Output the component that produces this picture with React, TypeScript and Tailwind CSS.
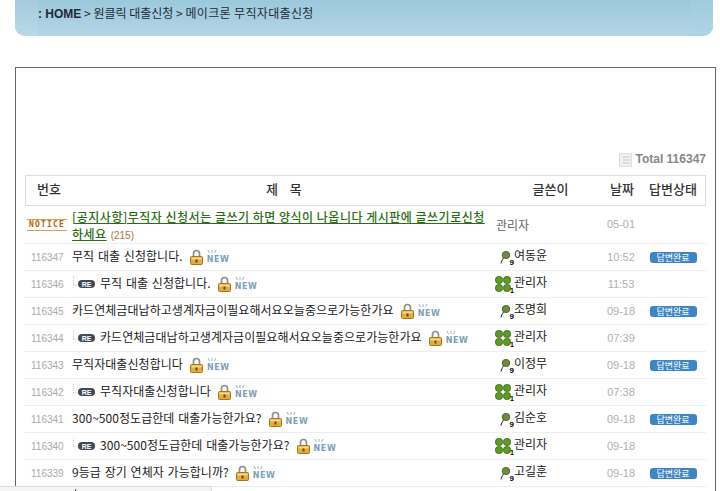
const KR = "font-['Noto_Sans_CJK_KR','Liberation_Sans',sans-serif]";

type Row = {
  no: string;
  title: string;
  re?: boolean;
  author: string;
  admin?: boolean;
  date: string;
  done?: boolean;
};

const rows: Row[] = [
  { no: '116347', title: '무직 대출 신청합니다.', author: '여동윤', date: '10:52', done: true },
  { no: '116346', title: '무직 대출 신청합니다.', re: true, author: '관리자', admin: true, date: '11:53' },
  { no: '116345', title: '카드연체금대납하고생계자금이필요해서요오늘중으로가능한가요', author: '조명희', date: '09-18', done: true },
  { no: '116344', title: '카드연체금대납하고생계자금이필요해서요오늘중으로가능한가요', re: true, author: '관리자', admin: true, date: '07:39' },
  { no: '116343', title: '무직자대출신청합니다', author: '이정무', date: '09-18', done: true },
  { no: '116342', title: '무직자대출신청합니다', re: true, author: '관리자', admin: true, date: '07:38' },
  { no: '116341', title: '300~500정도급한데 대출가능한가요?', author: '김순호', date: '09-18', done: true },
  { no: '116340', title: '300~500정도급한데 대출가능한가요?', re: true, author: '관리자', admin: true, date: '09-18' },
  { no: '116339', title: '9등급 장기 연체자 가능합니까?', author: '고길훈', date: '09-18', done: true },
];

function Lock() {
  return (
    <svg width="13" height="16" viewBox="0 0 13 16" className="ml-[7px] shrink-0">
      <path d="M3.5 8V4.5a3 3 0 0 1 6 0V8" fill="none" stroke="#8f8f86" strokeWidth="1.7" />
      <rect x="0.5" y="7.5" width="12" height="8" rx="1" fill="#e3ac3c" stroke="#a9741c" />
      <rect x="1.5" y="8.5" width="10" height="2" fill="#f6d987" />
      <rect x="5.5" y="10.5" width="2" height="3" fill="#6b4710" />
    </svg>
  );
}

function NewMark() {
  return (
    <span className="relative ml-[4px] inline-block h-[14px] w-[25px] shrink-0">
      <svg width="10" height="5" viewBox="0 0 10 5" className="absolute left-0 top-0">
        <path d="M1 0l1.5 3M5 0v3M9 0L7.5 3" stroke="#8fb6cc" strokeWidth="1" />
      </svg>
      <span className="absolute bottom-0 left-0 font-['DejaVu_Sans',sans-serif] text-[8px] font-bold leading-[9px] tracking-[0.6px] text-[#7d9fb8]">
        NEW
      </span>
    </span>
  );
}

function ReMark() {
  return (
    <span className="mr-[5px] flex shrink-0 items-center">
      <svg width="6" height="12" viewBox="0 0 6 12" className="mb-1">
        <path d="M1.5 0v9h4" fill="none" stroke="#b9c9d6" strokeWidth="1" strokeDasharray="1 1" />
      </svg>
      <span className="flex h-[8px] w-[17px] items-center justify-center rounded-[4px] bg-[#3f4a57] font-['Liberation_Sans',sans-serif] text-[7px] font-bold leading-none text-white">
        RE
      </span>
    </span>
  );
}

function Clover() {
  return (
    <span className="relative h-[16px] w-[19px] shrink-0">
      <svg width="16" height="16" viewBox="0 0 16 16" className="absolute left-0 top-0">
        <g fill="#5f9a22" stroke="#2f6410" strokeWidth="0.8">
          <rect x="0.5" y="0.5" width="7" height="7" rx="3" />
          <rect x="8.5" y="0.5" width="7" height="7" rx="3" />
          <rect x="0.5" y="8.5" width="7" height="7" rx="3" />
          <rect x="8.5" y="8.5" width="7" height="7" rx="3" />
        </g>
      </svg>
      <span className="absolute bottom-[-2px] right-0 font-['Liberation_Sans',sans-serif] text-[7px] font-bold leading-none text-black">
        1
      </span>
    </span>
  );
}

function Racket() {
  return (
    <span className="relative h-[15px] w-[14px] shrink-0">
      <svg width="10" height="14" viewBox="0 0 10 14" className="absolute left-0 top-0">
        <ellipse cx="6" cy="5" rx="3.8" ry="3.6" fill="#6f8a3a" stroke="#3c5220" strokeWidth="0.8" />
        <path d="M3.5 8C2 10 1.5 11.5 1 13.5" fill="none" stroke="#222" strokeWidth="1" />
      </svg>
      <span className="absolute bottom-[-2px] right-0 font-['Liberation_Sans',sans-serif] text-[8px] font-bold leading-none text-black">
        9
      </span>
    </span>
  );
}

function ListRow({ row }: { row: Row }) {
  return (
    <div className="flex h-[27px] items-center border-b border-[#eeeeee]">
      <div className="w-[46px] pl-[6px] font-['Liberation_Sans',sans-serif] text-[10px] text-[#aaaaaa]">{row.no}</div>
      <div className="flex w-[418px] items-center pl-[1px]">
        {row.re && <ReMark />}
        <span className={`${KR} relative top-[-1px] whitespace-nowrap text-[12px] leading-none tracking-[0.05px] text-[#222] [word-spacing:1px]`}>
          {row.title}
        </span>
        <Lock />
        <NewMark />
      </div>
      <div className="flex w-[113px] items-center pl-[1px]">
        <span className="flex w-[24px] shrink-0 justify-end">{row.admin ? <Clover /> : <Racket />}</span>
        <span className={`${KR} relative top-[-2px] text-[12px] leading-none text-[#222]`}>{row.author}</span>
      </div>
      <div className="w-[38px] text-center font-['Liberation_Sans',sans-serif] text-[11px] text-[#b0b0b0]">{row.date}</div>
      <div className="flex flex-1 justify-center">
        {row.done && (
          <span className={`${KR} flex h-[11px] w-[47px] items-center justify-center rounded-[3px] bg-[#3d86c6] text-[9px] leading-none text-white`}>
            답변완료
          </span>
        )}
      </div>
    </div>
  );
}

export default function App() {
  return (
    <div className="relative h-[491px] w-[720px] overflow-hidden bg-white">
      <div className="ml-[15px] mr-[7px] flex h-[36px] overflow-hidden rounded-b-[10px] bg-[#a6cfe1]">
        <div className="w-[23px] bg-gradient-to-b from-[#a3cbdd] to-[#bbd9e7]" />
        <div className="flex-1 bg-gradient-to-b from-[#9cc8dc] to-[#b3d5e5] pt-[5px]">
          <span className={`${KR} block whitespace-nowrap text-[12px] leading-[15px] text-[#1c2a33]`}>
            <b className="font-['Liberation_Sans',sans-serif]">: HOME</b> &gt; 원클릭 대출신청 &gt;{' '}
            <span className="tracking-[0.35px]">메이크론 무직자대출신청</span>
          </span>
        </div>
        <div className="w-[23px] bg-gradient-to-b from-[#a0cbde] to-[#afd5e6]" />
      </div>

      <div className="ml-[15px] mr-[4px] mt-[31px] h-[430px] border border-[#666666] px-[9px] pt-[84px]">
        <div className="flex h-[23px] items-start justify-end gap-[4px] font-['Liberation_Sans',sans-serif] text-[12px] font-bold text-[#888888]">
          <svg width="13" height="14" viewBox="0 0 13 14" className="mt-[1px]">
            <rect x="0.5" y="0.5" width="12" height="13" fill="#f0f0f0" stroke="#dddddd" />
            <path d="M4 4h7M4 7h7M4 10h7" stroke="#cccccc" />
          </svg>
          <span className="leading-[15px]">Total 116347</span>
        </div>

        <div className={`${KR} flex h-[31px] items-center border border-[#dddddd] pb-[4px] text-[13px] font-medium leading-none text-[#333]`}>
          <div className="w-[46px] pl-[11px]">번호</div>
          <div className="w-[418px] whitespace-pre pl-[194px]">제{'    '}목</div>
          <div className="w-[113px] pl-[8px] text-center">글쓴이</div>
          <div className="w-[38px] text-center">날짜</div>
          <div className="flex-1 text-center">답변상태</div>
        </div>

        <div className="flex h-[38px] items-center border-b border-[#eeeeee]">
          <div className="flex h-[12px] w-[46px] items-center">
            <span className="ml-[2px] w-[40px] border-y border-[#d9a05b] text-center font-['DejaVu_Sans_Mono',monospace] text-[8px] font-bold leading-[10px] tracking-[1.2px] text-[#b8650f]">
              NOTICE
            </span>
          </div>
          <div className={`${KR} w-[418px] whitespace-nowrap pl-[1px] pt-[3px] text-[12px] font-medium leading-[17.5px] tracking-[0.5px] text-[#2a6e12]`}>
            <div className="underline">[공지사항]무직자 신청서는 글쓰기 하면 양식이 나옵니다 게시판에 글쓰기로신청</div>
            <div>
              <span className="underline">하세요</span>
              <span className="ml-[4px] font-['Liberation_Sans',sans-serif] text-[10px] font-normal tracking-normal text-[#a8763e]">(215)</span>
            </div>
          </div>
          <div className={`${KR} w-[113px] pl-[7px] text-[12px] text-[#666666]`}>관리자</div>
          <div className="w-[38px] text-center font-['Liberation_Sans',sans-serif] text-[11px] text-[#b0b0b0]">05-01</div>
        </div>

        {rows.map((row) => (
          <ListRow key={row.no} row={row} />
        ))}
      </div>

      <div className="absolute left-0 top-[486px] h-[5px] w-[212px] border-r border-t border-[#dddddd] bg-[#f5f5f5]">
        <span className="absolute left-[75px] top-[2px] h-[2px] w-[1px] bg-[#444444]" />
      </div>
    </div>
  );
}
